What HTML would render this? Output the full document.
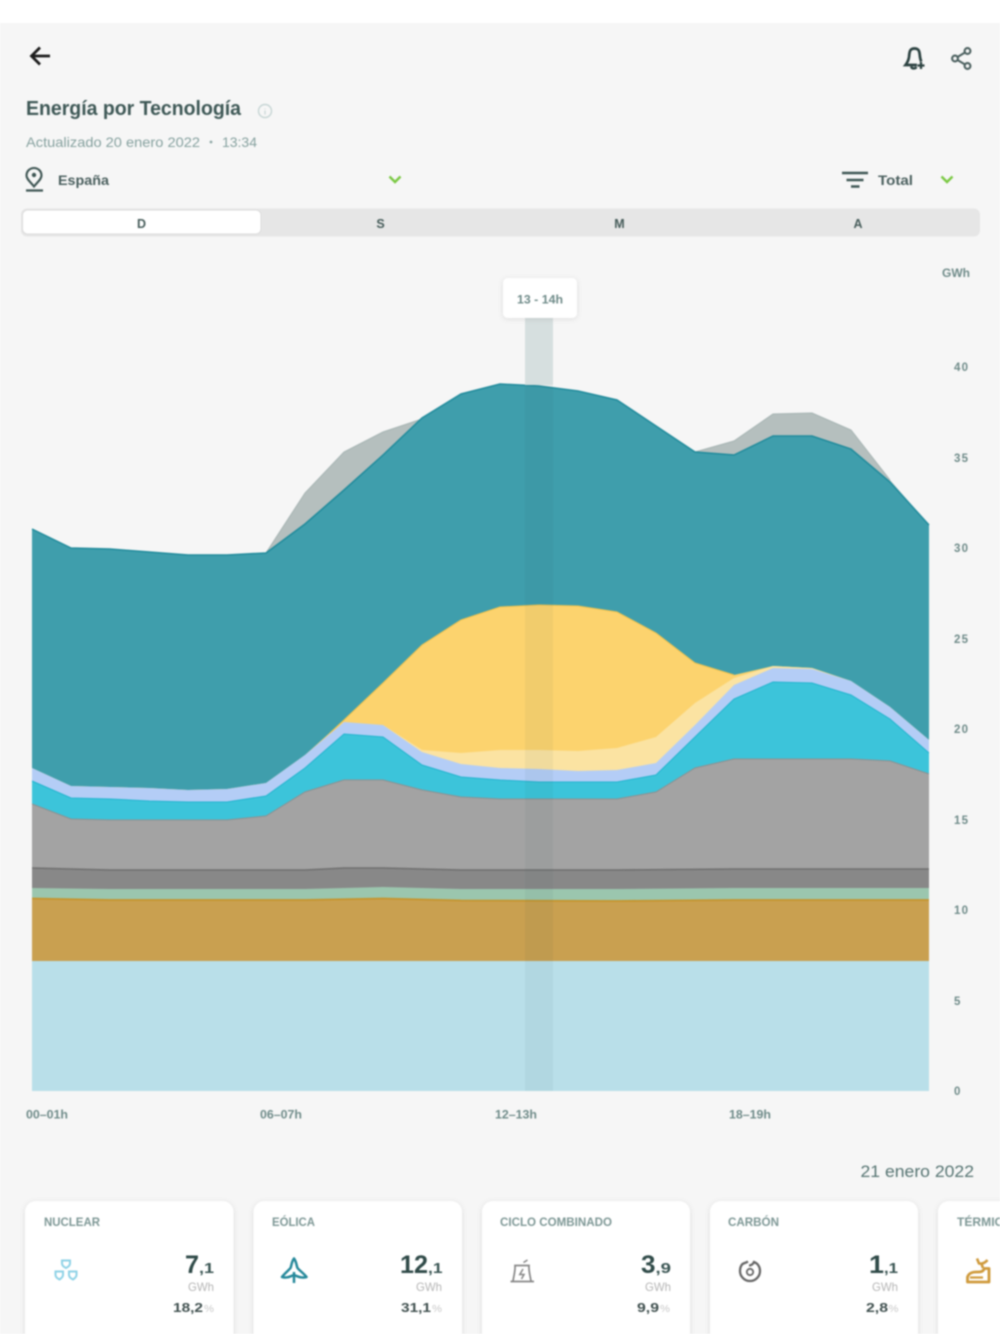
<!DOCTYPE html>
<html lang="es"><head><meta charset="utf-8"><title>Energía por Tecnología</title>
<style>
html,body{margin:0;padding:0;background:#fff;width:1000px;height:1334px;overflow:hidden}
svg{display:block;filter:blur(.7px)}
text{font-family:"Liberation Sans",sans-serif}
.b{font-weight:700}
.ax{font-size:11.5px;fill:#6f8b89;font-weight:700}
.lb{font-size:11.5px;fill:#7d9795;font-weight:700}
.v{font-size:25px;font-weight:700;fill:#2f4a48}
.d{font-size:15px;font-weight:700;fill:#3a5553}
.g{font-size:12px;fill:#b5b5b5}
.p{font-size:13px;font-weight:700;fill:#3f4f4e}
.pc{font-size:10px;fill:#c8c8c8}
</style></head><body>
<svg width="1000" height="1334" viewBox="0 0 1000 1334" xmlns="http://www.w3.org/2000/svg">
<defs><filter id="s" x="-10%" y="-10%" width="120%" height="130%"><feDropShadow dx="0" dy="1" stdDeviation="3" flood-color="#000" flood-opacity=".1"/></filter></defs>
<rect width="1000" height="1334" fill="#f6f6f6"/>
<rect width="1000" height="23" fill="#fff"/>

<path d="M50 56H32M40 47.500L31.500 56L40 64.500" fill="none" stroke="#1c1c1c" stroke-width="2.800"/>
<g fill="none" stroke="#2c4241" stroke-width="2.700">
<path d="M914.500 48.500C909.500 48.500 909.500 52 909 57C908.500 61 907 63 905.500 65H917M914.500 48.500C919.500 48.500 919.500 52 920 57C920.300 59 920.500 60 921.300 61.500"/>
<path d="M911 66.500C912 69 915 69 916.500 67" stroke-width="2.400"/>
<path d="M917.500 65.500H924.500M921 62V69" stroke-width="2.300"/>
</g>
<g fill="none" stroke="#4a5f5e" stroke-width="2.100">
<circle cx="967.500" cy="51" r="2.900"/><circle cx="955" cy="58.500" r="2.900"/><circle cx="967.500" cy="66" r="2.900"/>
<path d="M957.500 57L965 52.500M957.500 60L965 64.500"/>
</g>

<text x="26" y="115" class="b" font-size="20" fill="#3e5856" textLength="215" lengthAdjust="spacingAndGlyphs">Energía por Tecnología</text>
<circle cx="265" cy="111" r="6.500" fill="none" stroke="#c6d5d4" stroke-width="1.400"/>
<path d="M265 108.500v.8M265 110.500v4" stroke="#c6d5d4" stroke-width="1.200"/>
<text x="26" y="147" font-size="14" fill="#86a19f" textLength="174" lengthAdjust="spacingAndGlyphs">Actualizado 20 enero 2022</text>
<circle cx="211" cy="142" r="1.400" fill="#8ca6a4"/>
<text x="222" y="147" font-size="14" fill="#86a19f" textLength="35" lengthAdjust="spacingAndGlyphs">13:34</text>

<path d="M34 186.500C30 181.500 26.500 179 26.500 175.500C26.500 171 30 168 34 168C38 168 41.500 171 41.500 175.500C41.500 179 38 181.500 34 186.500Z" fill="none" stroke="#3f5654" stroke-width="2.100"/>
<circle cx="34" cy="175" r="2.200" fill="#3f5654"/>
<path d="M26 190.500H43" stroke="#3f5654" stroke-width="2.300"/>
<text x="58" y="185" class="b" font-size="14" fill="#4a5f5e" textLength="51" lengthAdjust="spacingAndGlyphs">España</text>
<path d="M389.500 176.500L395 182L400.500 176.500" fill="none" stroke="#7ac943" stroke-width="2.400"/>

<path d="M842 173H868M846.500 180H863.500M851 186.500H859.500" stroke="#3f5654" stroke-width="2.600"/>
<text x="878" y="185" class="b" font-size="14" fill="#4a5f5e" textLength="35" lengthAdjust="spacingAndGlyphs">Total</text>
<path d="M941.500 176.500L947 182L952.500 176.500" fill="none" stroke="#7ac943" stroke-width="2.400"/>

<rect x="21" y="208.500" width="959" height="28" rx="6" fill="#e6e6e6"/>
<rect x="22.500" y="210" width="238.500" height="24" rx="5" fill="#fff" stroke="#dcdcdc" stroke-width="1"/>
<g class="b" font-size="12.500" fill="#465c5a" text-anchor="middle">
<text x="141.500" y="228">D</text><text x="380.500" y="228">S</text><text x="619.500" y="228">M</text><text x="858" y="228">A</text></g>

<text x="942" y="277" class="ax" font-weight="400" textLength="28" lengthAdjust="spacingAndGlyphs">GWh</text>

<!-- chart -->
<polygon fill="#b5bfbe" points="266,553 305,493 344,452 383,432 422,419 461,394 500,384 539,386 578,391 617,400 656,426 695,452 734,441 773,414 812,413 851,430 890,480 929,525 929,1091 266,1091"/>
<polyline fill="none" stroke="#a5b3b2" stroke-width="1" points="266,553 305,493 344,452 383,432 422,419"/>
<polyline fill="none" stroke="#a5b3b2" stroke-width="1" points="695,452 734,441 773,414 812,413 851,430 890,480"/>
<polygon fill="#3f9eac" points="32,529 71,548 110,549 149,552 188,555 227,555 266,553 305,524 344,490 383,455 422,418 461,394 500,384 539,386 578,391 617,400 656,426 695,452 734,455 773,436 812,436 851,449 890,482 929,525 929,1091 32,1091"/>
<polyline fill="none" stroke="#1f8a9b" stroke-width="1.500" points="32,529 71,548 110,549 149,552 188,555 227,555 266,553 305,524 344,490 383,455 422,418 461,394 500,384 539,386 578,391 617,400 656,426 695,452 734,455 773,436 812,436 851,449 890,482 929,525"/>
<polygon fill="#fcd36e" points="32,768 71,786 110,787 149,788 188,790 227,789 266,783 305,755 344,720 383,683 422,645 461,620 500,607 539,605 578,606 617,612 656,633 695,663 734,675 773,666 812,668 851,681 890,707 929,740 929,1091 32,1091"/>
<polyline fill="none" stroke="#f5c34a" stroke-width="1" points="330,733 344,720 383,683 422,645 461,620 500,607 539,605 578,606 617,612 656,633 695,663 734,675"/>
<polygon fill="#fbe3a2" points="383,725 422,750 461,753 500,750 539,750 578,751 617,748 656,737 695,703 734,678 773,666 812,668 851,681 890,707 929,740 929,1091 383,1091"/>
<polygon fill="#b4cdf6" points="32,768 71,786 110,787 149,788 188,790 227,789 266,783 305,755 344,722 383,725 422,752 461,764 500,768 539,769 578,771 617,770 656,763 695,725 734,685 773,668 812,669 851,681 890,707 929,740 929,1091 32,1091"/>
<polygon fill="#3cc4da" points="32,781 71,798 110,799 149,801 188,802 227,802 266,796 305,768 344,734 383,737 422,765 461,777 500,780 539,782 578,782 617,782 656,775 695,737 734,699 773,682 812,683 851,695 890,719 929,753 929,1091 32,1091"/>
<polyline fill="none" stroke="#1fb4ce" stroke-width="1" points="32,781 71,798 110,799 149,801 188,802 227,802 266,796 305,768 344,734 383,737 422,765 461,777 500,780 539,782 578,782 617,782 656,775 695,737 734,699 773,682 812,683 851,695 890,719 929,753"/>
<polygon fill="#a3a3a3" points="32,804 71,819 110,820 149,820 188,820 227,820 266,816 305,792 344,780 383,780 422,790 461,797 500,799 539,799 578,799 617,799 656,792 695,768 734,759 773,759 812,759 851,759 890,761 929,774 929,1091 32,1091"/>
<polyline fill="none" stroke="#8f8f8f" stroke-width="1" points="32,804 71,819 110,820 149,820 188,820 227,820 266,816 305,792 344,780 383,780 422,790 461,797 500,799 539,799 578,799 617,799 656,792 695,768 734,759 773,759 812,759 851,759 890,761 929,774"/>
<polygon fill="#888" points="32,868 110,870 305,870 344,868 383,868 461,870 617,870 734,869 929,869 929,1091 32,1091"/>
<polyline fill="none" stroke="#6f6f6f" stroke-width="1.600" points="32,868 110,870 305,870 344,868 383,868 461,870 617,870 734,869 929,869"/>
<polygon fill="#9bc6ae" points="32,888 110,889 305,889 383,887 461,889 617,889 734,888 929,888 929,1091 32,1091"/>
<polygon fill="#c9a050" points="32,898 110,900 305,900 383,898 461,900 617,901 734,900 929,900 929,1091 32,1091"/>
<polyline fill="none" stroke="#c6942c" stroke-width="1.800" points="32,898.500 110,900 305,900 383,898.500 461,900.500 617,901 734,900 929,900"/>
<rect x="32" y="961" width="897" height="130" fill="#b9dfe9"/>

<rect x="525" y="318" width="28" height="67" fill="#d6dfdf"/>
<rect x="525" y="385" width="28" height="706" fill="#1e4646" opacity=".05"/>

<rect x="503" y="278" width="74" height="40" rx="5" fill="#fff" filter="url(#s)"/>
<text x="517" y="303.500" class="ax" textLength="46" lengthAdjust="spacingAndGlyphs" font-weight="400">13 - 14h</text>

<g class="ax">
<text x="954" y="371" textLength="14">40</text><text x="954" y="462" textLength="14">35</text><text x="954" y="552" textLength="14">30</text><text x="954" y="643" textLength="14">25</text><text x="954" y="733" textLength="14">20</text><text x="954" y="824" textLength="14">15</text><text x="954" y="914" textLength="14">10</text><text x="954" y="1005">5</text><text x="954" y="1095">0</text>
<text x="26" y="1118.500" textLength="42" lengthAdjust="spacingAndGlyphs">00–01h</text>
<text x="260" y="1118.500" textLength="42" lengthAdjust="spacingAndGlyphs">06–07h</text>
<text x="495" y="1118.500" textLength="42" lengthAdjust="spacingAndGlyphs">12–13h</text>
<text x="729" y="1118.500" textLength="42" lengthAdjust="spacingAndGlyphs">18–19h</text>
</g>

<text x="860.500" y="1177" font-size="17" fill="#567472" textLength="113.500" lengthAdjust="spacingAndGlyphs">21 enero 2022</text>

<!-- cards -->
<g fill="#fff" filter="url(#s)">
<rect x="25" y="1201" width="208.500" height="160" rx="11"/>
<rect x="253.500" y="1201" width="208.500" height="160" rx="11"/>
<rect x="482" y="1201" width="208" height="160" rx="11"/>
<rect x="710" y="1201" width="208" height="160" rx="11"/>
<rect x="938" y="1201" width="208" height="160" rx="11"/>
</g>

<text x="44" y="1226" class="lb" textLength="56" lengthAdjust="spacingAndGlyphs">NUCLEAR</text>
<text x="272" y="1226" class="lb" textLength="43" lengthAdjust="spacingAndGlyphs">EÓLICA</text>
<text x="500" y="1226" class="lb" textLength="112" lengthAdjust="spacingAndGlyphs">CICLO COMBINADO</text>
<text x="728" y="1226" class="lb" textLength="51" lengthAdjust="spacingAndGlyphs">CARBÓN</text>
<text x="957" y="1226" class="lb" textLength="55" lengthAdjust="spacingAndGlyphs">TÉRMICA</text>

<text x="185" y="1273" class="v" textLength="14" lengthAdjust="spacingAndGlyphs">7</text><text x="199" y="1273" class="d" textLength="15" lengthAdjust="spacingAndGlyphs">,1</text>
<text x="188" y="1291" class="g" textLength="26" lengthAdjust="spacingAndGlyphs">GWh</text>
<text x="173" y="1312" class="p" textLength="30" lengthAdjust="spacingAndGlyphs">18,2</text><text x="204" y="1312" class="pc" textLength="10" lengthAdjust="spacingAndGlyphs">%</text>

<text x="400" y="1273" class="v" textLength="28" lengthAdjust="spacingAndGlyphs">12</text><text x="428" y="1273" class="d" textLength="14.500" lengthAdjust="spacingAndGlyphs">,1</text>
<text x="416" y="1291" class="g" textLength="26" lengthAdjust="spacingAndGlyphs">GWh</text>
<text x="401" y="1312" class="p" textLength="30" lengthAdjust="spacingAndGlyphs">31,1</text><text x="432" y="1312" class="pc" textLength="10" lengthAdjust="spacingAndGlyphs">%</text>

<text x="641" y="1273" class="v" textLength="14.500" lengthAdjust="spacingAndGlyphs">3</text><text x="655.500" y="1273" class="d" textLength="15.500" lengthAdjust="spacingAndGlyphs">,9</text>
<text x="645" y="1291" class="g" textLength="26" lengthAdjust="spacingAndGlyphs">GWh</text>
<text x="637" y="1312" class="p" textLength="22" lengthAdjust="spacingAndGlyphs">9,9</text><text x="660" y="1312" class="pc" textLength="10" lengthAdjust="spacingAndGlyphs">%</text>

<text x="869" y="1273" class="v" textLength="15" lengthAdjust="spacingAndGlyphs">1</text><text x="884" y="1273" class="d" textLength="14" lengthAdjust="spacingAndGlyphs">,1</text>
<text x="872" y="1291" class="g" textLength="26" lengthAdjust="spacingAndGlyphs">GWh</text>
<text x="866" y="1312" class="p" textLength="22" lengthAdjust="spacingAndGlyphs">2,8</text><text x="888.500" y="1312" class="pc" textLength="10" lengthAdjust="spacingAndGlyphs">%</text>

<!-- nuclear icon -->
<g fill="none" stroke="#8ed2e6" stroke-width="2">
<path d="M62 1260.500H70V1263.500C70 1265.500 68 1267 66 1268C64 1267 62 1265.500 62 1263.500Z"/>
<path d="M55.500 1271.500H63V1275C63 1277 61 1278.500 59.500 1279.500C57.500 1278.500 55.500 1277 55.500 1275Z"/>
<path d="M69 1271.500H76.500V1275C76.500 1277 74.500 1278.500 73 1279.500C71 1278.500 69 1277 69 1275Z"/>
</g>
<!-- wind icon -->
<g fill="none" stroke="#24889a" stroke-width="2.500" stroke-linejoin="round">
<path d="M294 1258.500C291.500 1261.500 291.500 1266 290.500 1268C288 1271 284 1274 282 1277C286.500 1278.500 290 1276.500 294 1275C298 1276.500 301.500 1278.500 306.500 1277C304.500 1274 300 1271 297.500 1268C296.500 1266 296.500 1261.500 294 1258.500Z"/>
<path d="M294 1272V1283"/>
</g>
<!-- plant icon -->
<g fill="none" stroke="#858585" stroke-width="1.700">
<path d="M510.500 1281.500H534M513 1281C514 1275 515.500 1270 515 1265.500H529C528.500 1270 530 1275 531 1281"/>
<path d="M523.500 1262.500L527.500 1260" stroke-width="1.500"/>
<path d="M523 1269L519.800 1274.500H524L521.500 1279" stroke-width="1.500"/>
</g>
<!-- coal icon -->
<g fill="none" stroke="#666" stroke-width="2.300">
<path d="M748 1261.500C745.500 1263 744 1263 742.500 1264C740.500 1266 740 1268.500 740 1271C740 1276.500 744.500 1281 750 1281C755.500 1281 760 1276.500 760 1271C760 1267 758 1263.500 754 1262C753 1264 751.500 1265.500 749 1265.500"/>
<circle cx="750" cy="1272" r="3.200" stroke-width="1.800"/>
</g>
<!-- thermal icon -->
<g fill="none" stroke="#cf9a3c" stroke-linejoin="round">
<path d="M967.500 1282V1277C969 1272.500 973 1272 976.500 1272C980 1272 982.500 1272.500 984.500 1268.500H989V1282Z" stroke-width="2.800"/>
<path d="M970 1277.500H983" stroke-width="2.200"/>
<path d="M977 1258.500L979 1263.500C982 1264 985 1263 987.500 1260M981.500 1264L983 1268" stroke-width="2.600"/>
</g>
</svg>
</body></html>
